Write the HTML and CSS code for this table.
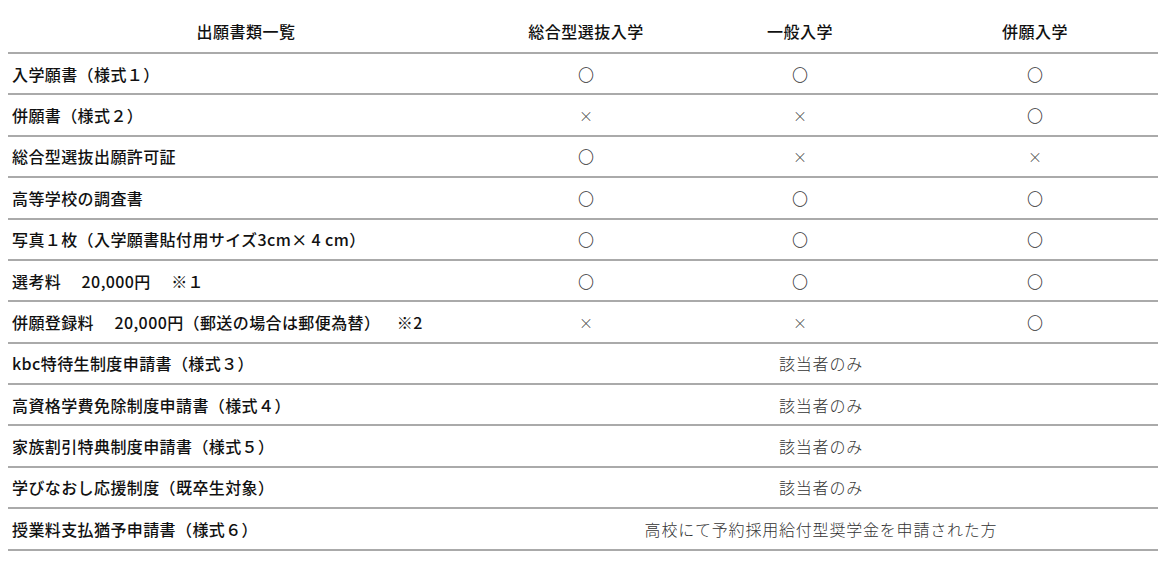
FILE: index.html
```html
<!DOCTYPE html>
<html lang="ja">
<head>
<meta charset="utf-8">
<title>出願書類一覧</title>
<link rel="stylesheet" href="styles.css">
</head>
<body>
<table class="docs">
  <colgroup>
    <col class="c-name">
    <col class="c-a">
    <col class="c-b">
    <col class="c-c">
  </colgroup>
  <thead>
    <tr>
      <th>出願書類一覧</th>
      <th>総合型選抜入学</th>
      <th>一般入学</th>
      <th>併願入学</th>
    </tr>
  </thead>
  <tbody>
    <tr><td class="name">入学願書（様式１）</td><td class="mark">〇</td><td class="mark">〇</td><td class="mark">〇</td></tr>
    <tr><td class="name">併願書（様式２）</td><td class="mark x">×</td><td class="mark x">×</td><td class="mark">〇</td></tr>
    <tr><td class="name">総合型選抜出願許可証</td><td class="mark">〇</td><td class="mark x">×</td><td class="mark x">×</td></tr>
    <tr><td class="name">高等学校の調査書</td><td class="mark">〇</td><td class="mark">〇</td><td class="mark">〇</td></tr>
    <tr><td class="name">写真１枚（入学願書貼付用サイズ3cm× 4 cm）</td><td class="mark">〇</td><td class="mark">〇</td><td class="mark">〇</td></tr>
    <tr><td class="name">選考料　 20,000円　 ※１</td><td class="mark">〇</td><td class="mark">〇</td><td class="mark">〇</td></tr>
    <tr><td class="name">併願登録料　 20,000円（郵送の場合は郵便為替）　  ※2</td><td class="mark x">×</td><td class="mark x">×</td><td class="mark">〇</td></tr>
    <tr><td class="name">kbc特待生制度申請書（様式３）</td><td class="note" colspan="3">該当者のみ</td></tr>
    <tr><td class="name">高資格学費免除制度申請書（様式４）</td><td class="note" colspan="3">該当者のみ</td></tr>
    <tr><td class="name">家族割引特典制度申請書（様式５）</td><td class="note" colspan="3">該当者のみ</td></tr>
    <tr><td class="name">学びなおし応援制度（既卒生対象）</td><td class="note" colspan="3">該当者のみ</td></tr>
    <tr><td class="name">授業料支払猶予申請書（様式６）</td><td class="note" colspan="3">高校にて予約採用給付型奨学金を申請された方</td></tr>
  </tbody>
</table>
</body>
</html>
```

FILE: styles.css
```css
html, body {
  margin: 0;
  padding: 0;
  background: #ffffff;
}

body {
  padding: 8px;
  font-family: "Noto Sans CJK JP", "Noto Sans", "Liberation Sans", sans-serif;
  font-size: 16px;
  color: #1a1a1a;
}

.docs {
  width: 1150px;
  table-layout: fixed;
  border-collapse: separate;
  border-spacing: 0;
}

.c-name { width: 476px; }
.c-a { width: 204px; }
.c-b { width: 224px; }
.c-c { width: 246px; }

.docs th {
  font-weight: 500;
  text-align: center;
  line-height: 24px;
  padding: 11px 4px 9px;
  border-bottom: 2px solid #aaaaaa;
  color: #111;
  letter-spacing: 0.5px;
}

.docs td {
  line-height: 24px;
  padding: 7.7px 4px;
  border-bottom: 2px solid #aaaaaa;
  white-space: pre;
}

.docs td.name {
  text-align: left;
  font-weight: 500;
  color: #111;
  letter-spacing: 0.4px;
}

.docs td.mark {
  text-align: center;
  font-weight: 300;
  color: #333;
}

.docs td.mark.x {
  font-size: 14px;
  color: #444;
}

.docs td.note {
  text-align: center;
  font-weight: 300;
  color: #333;
  letter-spacing: 0.8px;
}
```
